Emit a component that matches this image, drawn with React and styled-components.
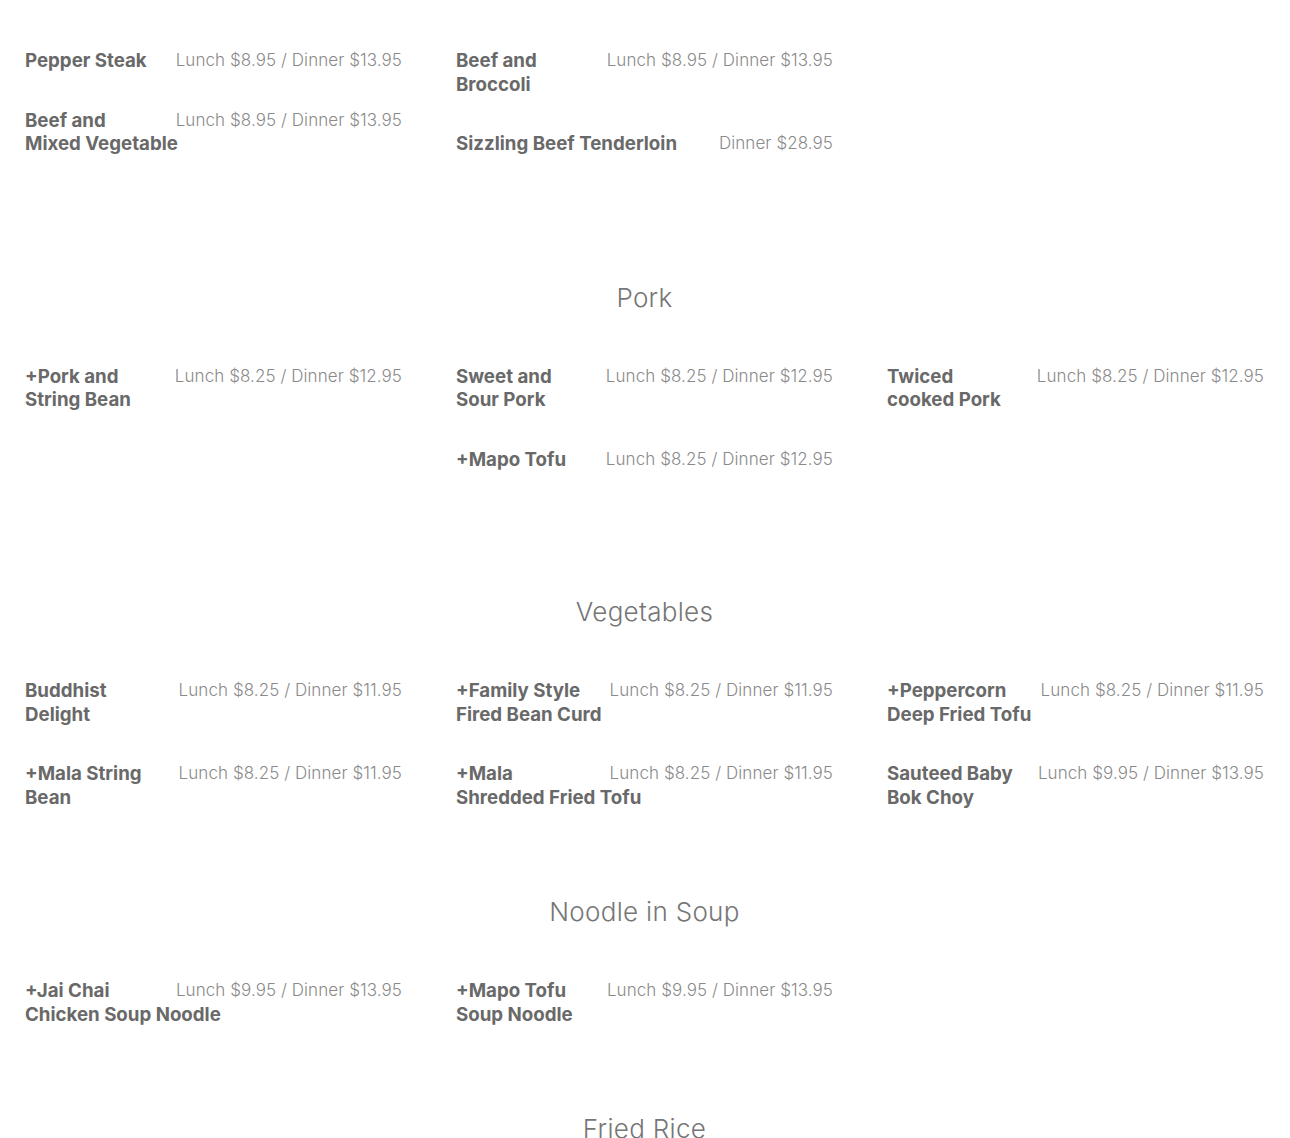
import React from 'react';
import styled, { createGlobalStyle } from 'styled-components';

const GlobalStyle = createGlobalStyle`
  html, body {
    margin: 0;
    padding: 0;
    background: #ffffff;
  }
  body {
    font-family: Inter, Lato, "Liberation Sans", sans-serif;
    -webkit-font-smoothing: antialiased;
  }
`;

const Page = styled.div`
  width: 1290px;
  box-sizing: border-box;
  padding: 49px 26px 0 25px;
  overflow: hidden;
`;

const Section = styled.section`
  padding-bottom: ${(p) => p.$after}px;
`;

const SectionTitle = styled.h2`
  margin: 0 0 51px;
  text-align: center;
  font-size: 26px;
  line-height: 32px;
  font-weight: 300;
  letter-spacing: 0.3px;
  color: #767676;
`;

const Grid = styled.div`
  display: grid;
  grid-template-columns: repeat(3, 1fr);
  column-gap: 54px;
`;

const Column = styled.div`
  display: flex;
  flex-direction: column;
`;

const Item = styled.div`
  display: flex;
  justify-content: space-between;
  align-items: flex-start;
  margin-bottom: 36px;
`;

const Name = styled.div`
  flex: 1;
  min-width: 0;
  font-size: 18.7px;
  line-height: 23.5px;
  font-weight: 700;
  color: #696969;
  white-space: nowrap;
`;

const Price = styled.div`
  flex: none;
  font-size: 17px;
  line-height: 23.5px;
  font-weight: 300;
  letter-spacing: 0.07px;
  color: #8a8a8a;
`;

// names are split by hand where the original menu wraps them
const menu = [
  {
    title: null,
    after: 90,
    columns: [
      [
        { name: ['Pepper Steak'], price: 'Lunch $8.95 / Dinner $13.95' },
        { name: ['Beef and', 'Mixed Vegetable'], price: 'Lunch $8.95 / Dinner $13.95' },
      ],
      [
        { name: ['Beef and', 'Broccoli'], price: 'Lunch $8.95 / Dinner $13.95' },
        { name: ['Sizzling Beef Tenderloin'], price: 'Dinner $28.95' },
      ],
      [],
    ],
  },
  {
    title: 'Pork',
    after: 89,
    columns: [
      [{ name: ['+Pork and', 'String Bean'], price: 'Lunch $8.25 / Dinner $12.95' }],
      [
        { name: ['Sweet and', 'Sour Pork'], price: 'Lunch $8.25 / Dinner $12.95' },
        { name: ['+Mapo Tofu'], price: 'Lunch $8.25 / Dinner $12.95' },
      ],
      [{ name: ['Twiced', 'cooked Pork'], price: 'Lunch $8.25 / Dinner $12.95' }],
    ],
  },
  {
    title: 'Vegetables',
    after: 51,
    columns: [
      [
        { name: ['Buddhist', 'Delight'], price: 'Lunch $8.25 / Dinner $11.95' },
        { name: ['+Mala String', 'Bean'], price: 'Lunch $8.25 / Dinner $11.95' },
      ],
      [
        { name: ['+Family Style', 'Fired Bean Curd'], price: 'Lunch $8.25 / Dinner $11.95' },
        { name: ['+Mala', 'Shredded Fried Tofu'], price: 'Lunch $8.25 / Dinner $11.95' },
      ],
      [
        { name: ['+Peppercorn', 'Deep Fried Tofu'], price: 'Lunch $8.25 / Dinner $11.95' },
        { name: ['Sauteed Baby', 'Bok Choy'], price: 'Lunch $9.95 / Dinner $13.95' },
      ],
    ],
  },
  {
    title: 'Noodle in Soup',
    after: 51,
    columns: [
      [{ name: ['+Jai Chai', 'Chicken Soup Noodle'], price: 'Lunch $9.95 / Dinner $13.95' }],
      [{ name: ['+Mapo Tofu', 'Soup Noodle'], price: 'Lunch $9.95 / Dinner $13.95' }],
      [],
    ],
  },
  {
    title: 'Fried Rice',
    after: 40,
    columns: [[], [], []],
  },
];

function MenuItem({ item }) {
  return (
    <Item>
      <Name>
        {item.name.map((line, i) => (
          <React.Fragment key={i}>
            {i > 0 && <br />}
            {line}
          </React.Fragment>
        ))}
      </Name>
      <Price>{item.price}</Price>
    </Item>
  );
}

export default function App() {
  return (
    <>
      <GlobalStyle />
      <Page>
        {menu.map((section, s) => (
          <Section key={s} $after={section.after}>
            {section.title && <SectionTitle>{section.title}</SectionTitle>}
            <Grid>
              {section.columns.map((col, c) => (
                <Column key={c}>
                  {col.map((item, i) => (
                    <MenuItem key={i} item={item} />
                  ))}
                </Column>
              ))}
            </Grid>
          </Section>
        ))}
      </Page>
    </>
  );
}
